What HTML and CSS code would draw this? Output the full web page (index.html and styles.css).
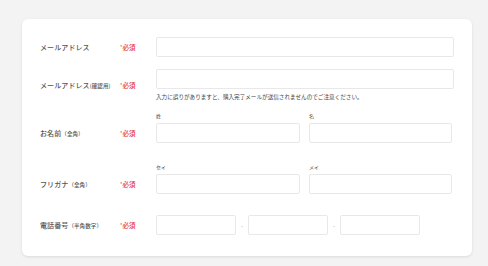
FILE: index.html
```html
<!DOCTYPE html>
<html lang="ja">
<head>
  <meta charset="UTF-8">
  <meta name="viewport" content="width=device-width, initial-scale=1.0">
  <title>お客様情報の入力</title>
  <link rel="stylesheet" href="styles.css">
</head>
<body>
  <div class="card">
    <form class="form">
      <div class="row">
        <div class="label">メールアドレス</div>
        <div class="req"><span class="star">*</span>必須</div>
        <div class="field">
          <input type="text" class="input">
        </div>
      </div>

      <div class="row row-confirm">
        <div class="label">メールアドレス<small class="paren">(確認用)</small></div>
        <div class="req"><span class="star">*</span>必須</div>
        <div class="field">
          <input type="text" class="input">
          <p class="note">入力に誤りがありますと、購入完了メールが送信されませんのでご注意ください。</p>
        </div>
      </div>

      <div class="row row-name">
        <div class="label label-sub">お名前<small class="paren">（全角）</small></div>
        <div class="req label-sub"><span class="star">*</span>必須</div>
        <div class="field pair">
          <div class="part">
            <div class="sub">姓</div>
            <input type="text" class="input">
          </div>
          <div class="part">
            <div class="sub">名</div>
            <input type="text" class="input">
          </div>
        </div>
      </div>

      <div class="row row-kana">
        <div class="label label-sub">フリガナ<small class="paren">（全角）</small></div>
        <div class="req label-sub"><span class="star">*</span>必須</div>
        <div class="field pair">
          <div class="part">
            <div class="sub">セイ</div>
            <input type="text" class="input">
          </div>
          <div class="part">
            <div class="sub">メイ</div>
            <input type="text" class="input">
          </div>
        </div>
      </div>

      <div class="row row-tel">
        <div class="label">電話番号<small class="paren">（半角数字）</small></div>
        <div class="req"><span class="star">*</span>必須</div>
        <div class="field tel">
          <input type="text" class="input">
          <span class="dash">-</span>
          <input type="text" class="input">
          <span class="dash">-</span>
          <input type="text" class="input">
        </div>
      </div>
    </form>
  </div>
</body>
</html>
```

FILE: styles.css
```css
body {
  margin: 0;
  background: #f3f3f3;
  font-family: "Noto Sans CJK JP", "Noto Sans", sans-serif;
  color: #444;
  padding: 19px 16px 10px 22px;
}

.card {
  background: #fff;
  border-radius: 6px;
  box-shadow: 0 1px 3px rgba(0, 0, 0, 0.1);
  padding: 18px 18px 21px 18px;
}

.row {
  display: flex;
  align-items: center;
}

.row-confirm {
  margin-top: 12px;
}

.row-name {
  margin-top: 11px;
}

.row-kana {
  margin-top: 20px;
}

.row-tel {
  margin-top: 21px;
}

.label {
  width: 80px;
  font-size: 7px;
  line-height: 10px;
  letter-spacing: 0.1px;
  color: #555;
  font-weight: 500;
  white-space: nowrap;
}

.paren {
  font-size: 5.5px;
}

.req {
  width: 36px;
  font-size: 6.5px;
  line-height: 10px;
  color: #e3314b;
  font-weight: 500;
  white-space: nowrap;
}

.star {
  font-size: 5px;
  vertical-align: 1px;
}

.label-sub {
  padding-top: 11px;
}

.field {
  flex: 1;
}

.input {
  display: block;
  box-sizing: border-box;
  width: 100%;
  height: 20px;
  margin: 0;
  border: 1px solid #e8e8e8;
  border-radius: 2px;
  background: #fff;
  outline: none;
}

.note {
  margin: 4px 0 0;
  font-size: 5.6px;
  line-height: 8px;
  color: #444;
  white-space: nowrap;
}

.pair {
  display: grid;
  grid-template-columns: 144px 143px;
  column-gap: 9px;
}

.sub {
  font-size: 5px;
  line-height: 7px;
  margin-bottom: 4px;
  color: #444;
}

.tel {
  display: flex;
  align-items: center;
}

.tel .input {
  width: 80px;
}

.dash {
  width: 12px;
  text-align: center;
  font-size: 5px;
  color: #777;
}
```
